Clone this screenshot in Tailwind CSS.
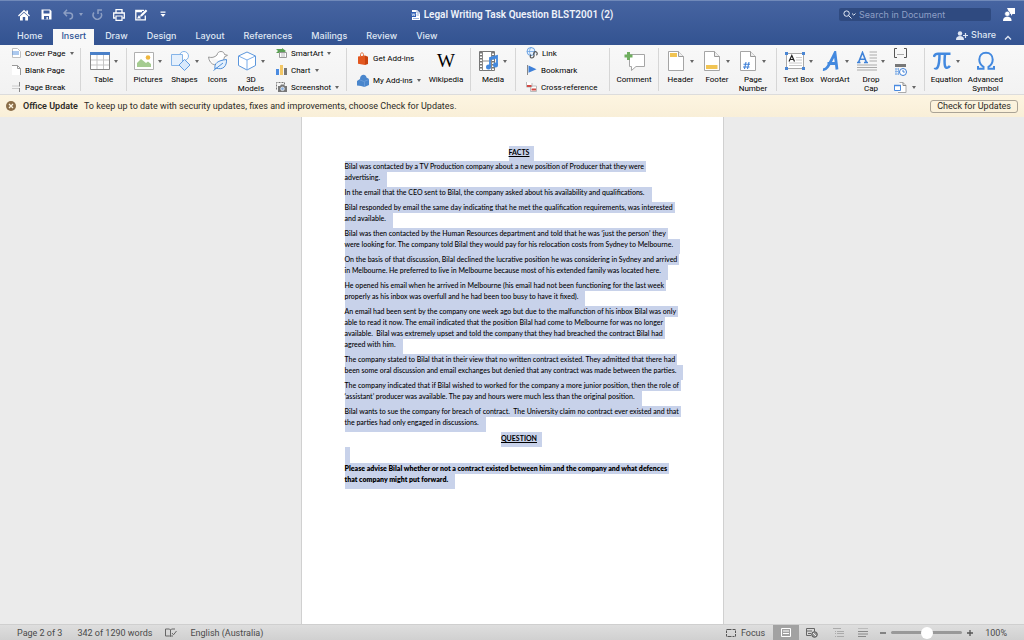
<!DOCTYPE html>
<html lang="en-AU">
  <head>
    <meta charset="UTF-8" />
    <meta name="viewport" content="width=device-width, initial-scale=1.0" />
    <title>Legal Writing Task Question BLST2001 (2)</title>
    <script src="https://cdn.jsdelivr.net/npm/@tailwindcss/browser@4"></script>
  </head>
  <body class="h-screen flex flex-col overflow-hidden bg-[#ebebeb] font-['Roboto','Liberation_Sans',sans-serif] text-[8px] leading-[9px] text-[#222]">
    <svg class="hidden">
      <symbol id="caret" viewBox="0 0 4 3"><path d="M0 0h4L2 3z" fill="#666" /></symbol>
    </svg>

    <header class="shrink-0 bg-linear-to-b from-[#4664a1] to-[#335391] text-white border-t border-[#7089b9]">
      <!-- title bar -->
      <div class="h-[27px] grid grid-cols-[1fr_auto_1fr] items-center">
        <div class="flex items-center pl-[18px]">
          <button aria-label="Home screen" class="mr-[11px]"><svg class="w-3 h-3" viewBox="0 0 12 12"><path d="M0 6.600 6 .8l2.300 2.200V1.500H10v3.200l2 1.900-.9.900L6 2.800.9 7.500z" fill="#fff" /><path d="M2 7.300 6 3.700l4 3.600V11.500H7.200V8H4.800v3.500H2z" fill="#fff" /></svg></button>
          <button aria-label="Save" class="mr-[11px]"><svg class="w-[11px] h-[11px]" viewBox="0 0 11 11"><path d="M.5.5h8.500l1.500 1.500v8.500H.5z" fill="#fff" /><path d="M2.500 1.500h6v3h-6zM3 7h5v3.500H6.800V8H5.500v2.500H3z" fill="#3d5c9b" /></svg></button>
          <button aria-label="Undo" class="flex items-center gap-[5px] mr-[9px] opacity-40"><svg class="w-[11px] h-[11px]" viewBox="0 0 11 11"><path d="M4 .8 1 4l3 3.200M1 4h5.500a3 3 0 0 1 0 6" fill="none" stroke="#fff" stroke-width="1.500" /></svg><svg class="w-1 h-[3px]" viewBox="0 0 4 3"><path d="M0 0h4L2 3z" fill="#fff" /></svg></button>
          <button aria-label="Redo" class="mr-[10px] opacity-40"><svg class="w-[11px] h-[11px]" viewBox="0 0 11 11"><path d="M2 3.500A4.200 4.200 0 1 0 9 4M6 5V1h4" fill="none" stroke="#fff" stroke-width="1.500" /></svg></button>
          <button aria-label="Print" class="mr-[10px]"><svg class="w-3 h-3" viewBox="0 0 12 12"><path d="M3 4V.7h6V4M2.500 9H.7V4h10.600v5H9.500" fill="none" stroke="#fff" stroke-width="1.300" /><path d="M3 7h6v4.300H3z" fill="#3d5c9b" stroke="#fff" stroke-width="1.200" /></svg></button>
          <button aria-label="Edit properties" class="mr-[12px]"><svg class="w-[13px] h-[12px]" viewBox="0 0 13 12"><path d="M9 1.300H.8v9.500h9.500V6.500M.8 2.500H7" fill="none" stroke="#fff" stroke-width="1.300" /><path d="m5 7.800.6-2.100L10.800.6l1.600 1.500-5.300 5.200z" fill="#fff" /><path d="M2 9.500 4 6l2 3.500z" fill="#fff" /></svg></button>
          <button aria-label="Customise toolbar"><svg class="w-[6px] h-[7px]" viewBox="0 0 6 7"><path d="M.5.500h5v1.200h-5zM.5 3h5L3 6z" fill="#fff" /></svg></button>
        </div>
        <h1 class="flex items-center gap-[4px] text-[10px] leading-3 font-semibold text-[#eef2fa]">
          <svg class="w-[9px] h-[10px]" viewBox="0 0 9 10"><path d="M1 0h5l3 3v7H1z" fill="#fff" /><path d="M6 0v3h3" fill="none" stroke="#9fb2d8" /><path d="M0 2h5v5H0z" fill="#2f5fb5" /><path d="m1 3.300.7 2.600.8-2.200.8 2.200.7-2.600" fill="none" stroke="#fff" stroke-width=".6" /><path d="M5.500 5H8M2 8.500h6" stroke="#6e8fcc" stroke-width=".7" /></svg>
          Legal Writing Task Question BLST2001 (2)
        </h1>
        <div class="flex items-center justify-end pr-[9px] gap-[12px]">
          <label class="flex items-center w-[152px] h-[13px] pl-1 rounded-[2px] bg-[#2f4a80]">
            <svg class="w-[13px] h-[9px] shrink-0" viewBox="0 0 13 9"><circle cx="3.600" cy="3.600" r="2.700" fill="none" stroke="#e4eaf6" /><path d="m5.500 5.500 3 3M9 3.500l1.800 1.700 1.700-1.700" fill="none" stroke="#e4eaf6" /></svg>
            <input type="text" aria-label="Search" placeholder="Search in Document" class="ml-[3px] w-full min-w-0 font-['Inter',sans-serif] text-[9px] leading-3 outline-none placeholder:text-[#8e9fc6]" />
          </label>
          <button aria-label="Feedback"><svg class="w-[12px] h-[13px]" viewBox="0 0 12 13"><path d="M4 0h8v6H9.500L8 8V6H7z" fill="#fff" /><circle cx="4.300" cy="5.800" r="2.600" fill="#fff" stroke="#3d5c9b" stroke-width=".6" /><path d="M0 13c0-3 1.500-4.200 4.300-4.200S8.600 10 8.600 13z" fill="#fff" /></svg></button>
        </div>
      </div>

      <!-- ribbon tabs -->
      <div class="h-[17px] flex items-end pl-[9px] pr-3 font-['Inter','Liberation_Sans',sans-serif] text-[9px] leading-[14px] text-[#dfe6f3] font-medium">
        <nav class="flex gap-[3px]">
          <button class="px-2 pb-[2px]">Home</button>
          <button class="px-2 pb-[2px] bg-[#f8f8f8] text-[#2f5596]">Insert</button>
          <button class="px-2 pb-[2px]">Draw</button>
          <button class="px-2 pb-[2px]">Design</button>
          <button class="px-2 pb-[2px]">Layout</button>
          <button class="px-2 pb-[2px]">References</button>
          <button class="px-2 pb-[2px]">Mailings</button>
          <button class="px-2 pb-[2px]">Review</button>
          <button class="px-2 pb-[2px]">View</button>
        </nav>
        <button class="ml-auto pb-[3px] flex items-center gap-[3px]"><svg class="w-[12px] h-[9px]" viewBox="0 0 12 9"><circle cx="4" cy="2.500" r="2.200" fill="#dfe6f3" /><path d="M0 9c0-3 1.500-4 4-4s4 1 4 4z" fill="#dfe6f3" /><path d="M9.500 2v5M7 4.500h5" stroke="#dfe6f3" stroke-width="1.200" /></svg>Share</button>
        <button aria-label="Collapse ribbon" class="ml-2 h-4"><svg class="w-[8px] h-[5px]" viewBox="0 0 8 5"><path d="m1 4.500 3-3 3 3" fill="none" stroke="#dfe6f3" stroke-width="1.300" /></svg></button>
      </div>
    </header>

    <!-- ribbon -->
    <section aria-label="Insert" class="shrink-0 h-[50px] flex bg-linear-to-b from-[#f8f8f8] to-[#f2f2f2] border-b border-[#dcdcdc] text-black">
      <div class="w-[81px] my-[3px] pl-3 border-r border-[#d6d6d6]">
        <div class="-my-px h-[46px] flex flex-col justify-between">
          <button class="flex items-center gap-1 h-3"><svg class="w-[9px] h-[10px]" viewBox="0 0 9 10"><path d="M.5.5h5l3 3v6h-8z" fill="#fff" stroke="#c0c0c0" /><path d="M0 4h7M0 6h7" stroke="#5b93dd" /></svg>Cover Page <svg class="w-1 h-[3px]"><use href="#caret" /></svg></button>
          <button class="flex items-center gap-1 h-3"><svg class="w-[9px] h-[10px]" viewBox="0 0 9 10"><path d="M0 0h5l3.500 3.500V10H0z" fill="#fff" /><path d="M0 .5h5.500l3 3V10M5.500.500v3h3" fill="none" stroke="#999" /></svg>Blank Page</button>
          <button class="flex items-center gap-1 h-3"><svg class="w-[9px] h-[10px]" viewBox="0 0 9 10"><path d="M0 4h7.500M0 6.500h7.500" stroke="#ccc" /><path d="M7.500 0v4.500M7.500 6v4" stroke="#888" /></svg>Page Break</button>
        </div>
      </div>
      <div class="w-[46px] my-[3px] flex border-r border-[#d6d6d6]">
        <button class="w-full pt-[3px] flex flex-col items-center gap-[4px]">
          <span class="flex items-center gap-[4px]"><svg class="w-5 h-5" viewBox="0 0 20 20"><path d="M.5 1.500h19v17H.5z" fill="#fff" stroke="#888" /><path d="M0 1h20v3H0z" fill="#4a80c8" /><path d="M7 4v14M13.500 4v14M1 9h18M1 14h18" stroke="#c5c5c5" /></svg><svg class="w-1 h-[3px]"><use href="#caret" /></svg></span>
          Table
        </button>
      </div>
      <div class="w-[220px] my-[3px] flex border-r border-[#d6d6d6]">
        <button class="w-[42px] pt-[3px] flex flex-col items-center gap-[4px]">
          <span class="flex items-center gap-[4px]"><svg class="w-5 h-5" viewBox="0 0 20 20"><path d="M.5 1.500h19v17H.5z" fill="#fff" stroke="#b0b0b0" /><path d="M3 16v-4l4-4 5 4 2-1.500 3 2.500v3z" fill="#a5cc91" /><circle cx="14" cy="6.500" r="2.300" fill="#efb73e" /></svg><svg class="w-1 h-[3px]"><use href="#caret" /></svg></span>
          Pictures
        </button>
        <button class="w-[31px] pt-[3px] flex flex-col items-center gap-[4px]">
          <span class="flex items-center gap-[4px]"><svg class="w-5 h-5" viewBox="0 0 20 20"><circle cx="13" cy="5" r="4.500" fill="#fff" stroke="#85b4e8" /><path d="M.5 3.500h11v11H.5z" fill="#e5f0fc" stroke="#85b4e8" /><path d="m13.500 8.500 5.500 5.500-5.500 5.500L8 14z" fill="#d8e9fc" stroke="#5f9ce2" /></svg><svg class="w-1 h-[3px]"><use href="#caret" /></svg></span>
          Shapes
        </button>
        <button class="w-[35px] pt-[3px] flex flex-col items-center gap-[4px]">
          <svg class="w-5 h-5 shrink-0" viewBox="0 0 20 20"><path d="M.5 6c3 1 6 .5 8.500-2C9.500 1.500 11 .5 13 .5c2 0 3.300 1.300 3.500 3l3 .8-3 1.500c-.3 2-1 3-2.500 4.200M.5 6C1 10 3 13 7 14" fill="#fff" stroke="#999" /><path d="M7 18c-1-6 3-8.500 11.500-9.500C19 15 15 19.500 8 17zM5.500 19.500 15 12" fill="#e4f0fc" stroke="#4f8fdb" /></svg>
          Icons
        </button>
        <button class="w-[32px] pt-[3px] flex flex-col items-center gap-[4px]">
          <span class="flex items-center gap-[4px]"><svg class="w-5 h-5" viewBox="0 0 20 20"><path d="m10 1 8.500 4v9.500L10 19l-8.500-4.500V5z" fill="#fff" stroke="#5b96dc" /><path d="M1.500 5 10 9l8.500-4M10 9v10" fill="none" stroke="#7badea" /></svg><svg class="w-1 h-[3px]"><use href="#caret" /></svg></span>
          <span>3D<br />Models</span>
        </button>
        <div class="ml-[9px] -my-px h-[46px] flex flex-col justify-between">
          <button class="flex items-center gap-1 h-3"><svg class="w-[11px] h-[10px]" viewBox="0 0 11 10"><path d="M0 1h6V0l4 3-4 3V5H0l2-2z" fill="#5ba053" /><path d="M3.500 4.500h7v5h-7z" fill="#fff" stroke="#999" /><path d="M5 6h4M5 8h4" stroke="#aaa" stroke-width=".8" /></svg>SmartArt <svg class="w-1 h-[3px]"><use href="#caret" /></svg></button>
          <button class="flex items-center gap-1 h-3"><svg class="w-[11px] h-[10px]" viewBox="0 0 11 10"><path d="M0 4h3v6H0z" fill="#4b8be0" /><path d="M4 0h3v10H4z" fill="#f3c766" /><path d="M8 3h3v7H8z" fill="#777" /></svg>Chart <svg class="w-1 h-[3px]"><use href="#caret" /></svg></button>
          <button class="flex items-center gap-1 h-3"><svg class="w-[11px] h-[10px]" viewBox="0 0 11 10"><path d="M.5 7.500V.5h8v2" fill="none" stroke="#777" stroke-dasharray="2 1" /><path d="M2 4h2l1-1.500h3L9 4h2v6H2z" fill="#777" /><circle cx="6.500" cy="6.800" r="1.800" fill="#8bb0e0" stroke="#fff" stroke-width=".7" /></svg>Screenshot <svg class="w-1 h-[3px]"><use href="#caret" /></svg></button>
        </div>
      </div>
      <div class="w-[124px] my-[3px] pl-[10px] flex border-r border-[#d6d6d6]">
        <div class="w-[66px] flex flex-col justify-around">
          <button class="flex items-center gap-1 h-3"><svg class="w-[12px] h-[13px] shrink-0" viewBox="0 0 12 13"><path d="m1 4.500 7-1v9.500l-7-1.200z" fill="#e2571f" /><path d="m8 3.500 3 1.200V12l-3 1z" fill="#c8430f" /><path d="M3.500 5V2.500C3.500.3 6.500.300 6.500 2.500v2" fill="none" stroke="#e0703f" /></svg><span class="whitespace-nowrap">Get Add-ins</span></button>
          <button class="flex items-center gap-1 h-3"><svg class="w-[12px] h-[13px] shrink-0" viewBox="0 0 12 13"><path d="M0 7l3-2c0-5 6-5.500 6.500-1.500L12 5v6l-4.500 2L4 12l-4-.5z" fill="#4a86cc" /><path d="m3 6 4 1.500 5-2M7.500 8v5" fill="none" stroke="#7aa8e0" stroke-width=".6" /></svg><span class="whitespace-nowrap">My Add-ins</span> <svg class="w-1 h-[3px] shrink-0"><use href="#caret" /></svg></button>
        </div>
        <button class="w-[46px] pt-[3px] flex flex-col items-center gap-[4px]">
          <span class="h-5 text-[19px] leading-5 text-black font-['Liberation_Serif',serif]">W</span>
          Wikipedia
        </button>
      </div>
      <div class="w-[45px] my-[3px] flex border-r border-[#d6d6d6]">
        <button class="w-full pt-[3px] flex flex-col items-center gap-[4px]">
          <span class="flex items-center gap-[4px]"><svg class="w-5 h-5" viewBox="0 0 20 20"><path d="M.5.500h15v19H.5z" fill="#fff" stroke="#777" /><path d="M3.500.5v19M12.500.5v19M3.500 10h9" stroke="#888" /><path d="M2 1v18M14 1v18" stroke="#777" stroke-width="2" stroke-dasharray="1.500 1.500" /><path d="M11 16V7l7-2v9M11 8.500l7-2" fill="none" stroke="#4388dd" stroke-width="1.800" /><circle cx="9.500" cy="16" r="2.500" fill="#4388dd" /><circle cx="16.500" cy="14" r="2.500" fill="#4388dd" /></svg><svg class="w-1 h-[3px]"><use href="#caret" /></svg></span>
          Media
        </button>
      </div>
      <div class="w-[94px] my-[3px] pl-[10px] border-r border-[#d6d6d6]">
        <div class="-my-px h-[46px] flex flex-col justify-between">
          <button class="flex items-center gap-1 h-3"><svg class="w-[12px] h-3" viewBox="0 0 12 12"><circle cx="5" cy="4.500" r="4" fill="#e8f2fd" stroke="#6ba2e2" /><path d="M1 4.500h8M5 .5C3 3 3 6 5 8.500" fill="none" stroke="#6ba2e2" stroke-width=".8" /><path d="M8 7.500c-1-1.500.5-3.500 2-2.800 1.700.8 1.500 2.800.3 3.500M7.500 7c1.300 1.500.300 4-1.500 4-2 0-2.300-2-1-3.200" fill="none" stroke="#555" stroke-width="1.200" /></svg>Link</button>
          <button class="flex items-center gap-1 h-3"><svg class="w-[11px] h-[10px]" viewBox="0 0 11 10"><path d="M1.500 0v10" stroke="#888" /><path d="m2.500.500 8 3.700-8 3.500z" fill="#3f80d8" /></svg>Bookmark</button>
          <button class="flex items-center gap-1 h-3"><svg class="w-[11px] h-[10px]" viewBox="0 0 11 10"><path d="M.5 0v5H6V1M4.500 9.500V4h6v5.500z" fill="#fff" stroke="#bbb" /><path d="M1 4h4.500M5.500 7.500h4.500" stroke="#d14a45" stroke-width="1.800" /></svg>Cross-reference</button>
        </div>
      </div>
      <div class="w-[49px] my-[3px] flex border-r border-[#d6d6d6]">
        <button class="w-full pt-[3px] flex flex-col items-center gap-[4px]">
          <svg class="w-[21px] h-5 shrink-0" viewBox="0 0 21 20"><path d="M5.500 3.500h15v12H12l-4.500 4v-4h-2z" fill="#fff" stroke="#a5a5a5" /><path d="M4.500 1v8M.5 5h8" stroke="#6fae5f" stroke-width="3" /></svg>
          Comment
        </button>
      </div>
      <div class="w-[118px] my-[3px] pl-[3px] flex border-r border-[#d6d6d6]">
        <button class="w-[37px] pt-[3px] flex flex-col items-center gap-[4px]">
          <span class="flex items-center gap-[6px]"><svg class="w-4 h-5" viewBox="0 0 16 20"><path d="M.5.500h10l5 5v14H.5z" fill="#fff" stroke="#a5a5a5" /><path d="M10.500.500v5h5" fill="#eee" stroke="#999" /><path d="M2 2h7v4H2z" fill="#f1c453" /></svg><svg class="w-1 h-[3px]"><use href="#caret" /></svg></span>
          Header
        </button>
        <button class="w-[36px] pt-[3px] flex flex-col items-center gap-[4px]">
          <span class="flex items-center gap-[6px]"><svg class="w-4 h-5" viewBox="0 0 16 20"><path d="M.5.500h10l5 5v14H.5z" fill="#fff" stroke="#a5a5a5" /><path d="M10.500.500v5h5" fill="#eee" stroke="#999" /><path d="M2 14h11.500v4H2z" fill="#f1c453" /></svg><svg class="w-1 h-[3px]"><use href="#caret" /></svg></span>
          Footer
        </button>
        <button class="w-[36px] pt-[3px] flex flex-col items-center gap-[4px]">
          <span class="flex items-center gap-[6px]"><svg class="w-4 h-5" viewBox="0 0 16 20"><path d="M.5.500h10l5 5v14H.5z" fill="#fff" stroke="#a5a5a5" /><path d="M10.500.500v5h5" fill="#eee" stroke="#999" /><path d="M6 11 4.500 18M9 11l-1.500 7M3.500 13.200h6.500M3 16h6.500" stroke="#3f80d8" stroke-width="1.100" /></svg><svg class="w-1 h-[3px]"><use href="#caret" /></svg></span>
          <span>Page<br />Number</span>
        </button>
      </div>
      <div class="w-[148px] my-[3px] pl-[3px] flex border-r border-[#d6d6d6]">
        <button class="w-[37px] pt-[3px] flex flex-col items-center gap-[4px] whitespace-nowrap">
          <span class="flex items-center gap-[4px]"><svg class="w-5 h-5" viewBox="0 0 20 20"><path d="M1.500 2.500h17v15h-17z" fill="#fff" stroke="#aaa" /><path d="M11 6.500h6M11 9h6M4 12h13M4 14.500h13" stroke="#ccc" /><path d="M4 10.500 6.800 4.500l2.700 6M5 8.500h3.500" fill="none" stroke="#222" stroke-width="1.200" /><path d="M0 1h3v3H0zM17 1h3v3h-3zM0 16h3v3H0zM17 16h3v3h-3z" fill="#4a86d4" /></svg><svg class="w-1 h-[3px]"><use href="#caret" /></svg></span>
          Text Box
        </button>
        <button class="w-[36px] pt-[3px] flex flex-col items-center gap-[4px]">
          <span class="flex items-center gap-[5px]"><svg class="w-[18px] h-5" viewBox="0 0 18 20"><path d="M1 18.500c4 .5 6-4.500 12-16.500l2 16.500M5.500 12.500h9" fill="none" stroke="#4389df" stroke-width="2.800" /></svg><svg class="w-1 h-[3px]"><use href="#caret" /></svg></span>
          WordArt
        </button>
        <button class="w-[36px] pt-[3px] flex flex-col items-center gap-[4px]">
          <span class="flex items-center gap-[4px]"><svg class="w-5 h-5" viewBox="0 0 20 20"><path d="M12.500 1H20M12.500 4H20M12.500 7H20M12.500 10H20M0 14h20M0 16.500h20M0 19h20" stroke="#aaa" /><path d="M1.500 11.500 5.500 1.500l4 10M3 8.200h5M0 11.500h3.500M7 11.500h4" fill="none" stroke="#3f82d8" stroke-width="1.600" /></svg><svg class="w-1 h-[3px]"><use href="#caret" /></svg></span>
          <span>Drop<br />Cap</span>
        </button>
        <div class="ml-[5px] -my-px h-[46px] flex flex-col justify-between">
          <button aria-label="Field" class="flex items-center h-3"><svg class="w-[13px] h-[10px]" viewBox="0 0 13 10"><path d="M3 .5H.5v9H3M10 .5h2.500v9H10" fill="none" stroke="#555" /><path d="M3 6.500h7" stroke="#aaa" /></svg></button>
          <button aria-label="Date and time" class="flex items-center h-3"><svg class="w-[13px] h-3" viewBox="0 0 13 12"><path d="M1 0h11v3H1z" fill="#777" /><path d="M1 5h3M1 7.500h3M1 10h3M2 4v7M4.500 4v7" stroke="#8ab4e8" /><circle cx="9" cy="8" r="3.500" fill="#fff" stroke="#3f80d8" /><path d="M9 6v2h1.800" fill="none" stroke="#3f80d8" /></svg></button>
          <button aria-label="Object" class="flex items-center gap-[5px] h-3"><svg class="w-[13px] h-[11px]" viewBox="0 0 13 11"><path d="M5.500.500h3.500l3 3v7H4" fill="#fff" stroke="#aaa" /><path d="M9 .5v3h3" fill="none" stroke="#888" /><path d="M.5 3.500h6v5h-6z" fill="#fff" stroke="#4a8be0" /><path d="M0 3.500h7" stroke="#4a8be0" stroke-width="1.500" /></svg><svg class="w-1 h-[3px]"><use href="#caret" /></svg></button>
        </div>
      </div>
      <div class="my-[3px] pl-[2px] flex">
        <button class="w-[39px] pt-[3px] flex flex-col items-center gap-[4px]">
          <span class="flex items-center gap-[5px]"><svg class="w-[18px] h-5" viewBox="0 0 18 20"><path d="M.8 6C1.500 3 3 2.700 5 2.700h12.500M6.500 3c0 6-.5 11-2 13.500-1 1.500-2.500 1.200-2.700.2M12 3c-.5 5-.8 9 0 12 .6 2.500 3.500 2.500 4.800-.2" fill="none" stroke="#4389df" stroke-width="2.500" /></svg><svg class="w-1 h-[3px]"><use href="#caret" /></svg></span>
          Equation
        </button>
        <button class="w-[39px] pt-[3px] flex flex-col items-center gap-[4px]">
          <svg class="w-[18px] h-5 shrink-0" viewBox="0 0 18 20"><path d="M1 15v2.800h5.500v-2C3.500 14 2.300 11.500 2.300 8.500c0-4 2.700-6.800 6.700-6.800s6.700 2.800 6.700 6.800c0 3-1.200 5.500-4.200 7.300v2H17V15" fill="none" stroke="#4389df" stroke-width="2" /></svg>
          <span>Advanced<br />Symbol</span>
        </button>
      </div>
    </section>

    <!-- update notice -->
    <div class="shrink-0 h-[22px] flex items-center pl-[6px] pr-[6px] bg-linear-to-b from-[#fdf5e1] to-[#f9efd8] text-[9px] leading-3 text-[#2c2a26]">
      <button aria-label="Dismiss"><svg class="w-[10px] h-[10px]" viewBox="0 0 10 10"><circle cx="5" cy="5" r="5" fill="#8a6d48" /><path d="m3 3 4 4M7 3 3 7" stroke="#fdf5e1" stroke-width="1.300" /></svg></button>
      <strong class="ml-[7px] font-semibold">Office Update</strong>
      <span class="ml-[6px]">To keep up to date with security updates, fixes and improvements, choose Check for Updates.</span>
      <button class="ml-auto h-[13px] px-[6px] rounded-[3px] border border-[#aaa396] leading-[11px]">Check for Updates</button>
    </div>

    <!-- document -->
    <main class="grow min-h-0 flex justify-center">
      <article class="w-[423px] px-[43px] pt-[29px] bg-white border-x border-[#d0d0d0] font-['Lato','Liberation_Sans',sans-serif] font-medium text-[7px] leading-[11px] text-black whitespace-nowrap">
        <h2 class="flex justify-center pl-[19px] font-bold leading-[13px]"><span class="h-[15px] pr-[5px] bg-[#c8d2ea] underline">FACTS</span></h2>
        <p class="flex flex-col items-start"><span class="pr-[2px] bg-[#c8d2ea]">Bilal was contacted by a TV Production company about a new position of Producer that they were</span><span class="h-[15px] pr-[7px] bg-[#c8d2ea]">advertising.</span></p>
        <p class="flex flex-col items-start"><span class="h-[15px] pr-[7px] bg-[#c8d2ea]">In the email that the CEO sent to Bilal, the company asked about his availability and qualifications.</span></p>
        <p class="flex flex-col items-start"><span class="pr-[2px] bg-[#c8d2ea]">Bilal responded by email the same day indicating that he met the qualification requirements, was interested</span><span class="h-[15px] pr-[7px] bg-[#c8d2ea]">and available.</span></p>
        <p class="flex flex-col items-start"><span class="pr-[2px] bg-[#c8d2ea]">Bilal was then contacted by the Human Resources department and told that he was ‘just the person’ they</span><span class="h-[15px] pr-[7px] bg-[#c8d2ea]">were looking for. The company told Bilal they would pay for his relocation costs from Sydney to Melbourne.</span></p>
        <p class="flex flex-col items-start"><span class="pr-[2px] bg-[#c8d2ea]">On the basis of that discussion, Bilal declined the lucrative position he was considering in Sydney and arrived</span><span class="h-[15px] pr-[7px] bg-[#c8d2ea]">in Melbourne. He preferred to live in Melbourne because most of his extended family was located here.</span></p>
        <p class="flex flex-col items-start"><span class="pr-[2px] bg-[#c8d2ea]">He opened his email when he arrived in Melbourne (his email had not been functioning for the last week</span><span class="h-[15px] pr-[7px] bg-[#c8d2ea]">properly as his inbox was overfull and he had been too busy to have it fixed).</span></p>
        <p class="flex flex-col items-start"><span class="pr-[2px] bg-[#c8d2ea]">An email had been sent by the company one week ago but due to the malfunction of his inbox Bilal was only</span><span class="pr-[2px] bg-[#c8d2ea]">able to read it now. The email indicated that the position Bilal had come to Melbourne for was no longer</span><span class="pr-[2px] bg-[#c8d2ea]">available.&nbsp; Bilal was extremely upset and told the company that they had breached the contract Bilal had</span><span class="h-[15px] pr-[7px] bg-[#c8d2ea]">agreed with him.</span></p>
        <p class="flex flex-col items-start"><span class="pr-[2px] bg-[#c8d2ea]">The company stated to Bilal that in their view that no written contract existed. They admitted that there had</span><span class="h-[15px] pr-[7px] bg-[#c8d2ea]">been some oral discussion and email exchanges but denied that any contract was made between the parties.</span></p>
        <p class="flex flex-col items-start"><span class="pr-[2px] bg-[#c8d2ea]">The company indicated that if Bilal wished to worked for the company a more junior position, then the role of</span><span class="h-[15px] pr-[7px] bg-[#c8d2ea]">‘assistant’ producer was available. The pay and hours were much less than the original position.</span></p>
        <p class="flex flex-col items-start"><span class="pr-[2px] bg-[#c8d2ea]">Bilal wants to sue the company for breach of contract.&nbsp; The University claim no contract ever existed and that</span><span class="h-[15px] pr-[7px] bg-[#c8d2ea]">the parties had only engaged in discussions.</span></p>
        <h2 class="flex justify-center pl-[19px] font-bold leading-[13px]"><span class="h-[15px] pr-[5px] bg-[#c8d2ea] underline">QUESTION</span></h2>
        <p class="w-[5px] h-4 bg-[#c8d2ea]"></p>
        <p class="flex flex-col items-start font-extrabold"><span class="pr-[2px] bg-[#c8d2ea]">Please advise Bilal whether or not a contract existed between him and the company and what defences</span><span class="h-[15px] pr-[7px] bg-[#c8d2ea]">that company might put forward.</span></p>
      </article>
    </main>

    <!-- status bar -->
    <footer class="shrink-0 h-4 flex items-center pl-[17px] pr-[17px] bg-linear-to-b from-[#dedede] to-[#d0d0d0] border-t border-[#cfcfcf] text-[9px] leading-3 text-[#4a4a4a]">
      <button>Page 2 of 3</button>
      <button class="ml-[15px]">342 of 1290 words</button>
      <button aria-label="Proofing" class="ml-[13px]"><svg class="w-[12px] h-[9px]" viewBox="0 0 12 9"><path d="M10 1H6.500L5.500 2 4.500 1h-4v7h4l1 .7 1-.7H8M5.500 2v6.500M7 5l1.500 1.800L11.500 3" fill="none" stroke="#666" /></svg></button>
      <button class="ml-[13px]">English (Australia)</button>
      <div class="ml-auto flex items-center h-full">
        <button class="flex items-center gap-[5px] mr-[8px]"><svg class="w-[10px] h-[8px]" viewBox="0 0 10 8"><path d="M3 .5H.5v7H3M7 .5h2.500v7H7M3 .5h4M3 7.500h4" fill="none" stroke="#555" stroke-dasharray="2.500 1" /></svg>Focus</button>
        <button aria-label="Print layout" class="w-[26px] h-full flex items-center justify-center bg-[#a2a2a2]"><svg class="w-[10px] h-[9px]" viewBox="0 0 10 9"><path d="M.5.500h9v8h-9zM2 3h6M2 5.500h6" fill="none" stroke="#fff" /></svg></button>
        <button aria-label="Web layout" class="w-[26px] flex justify-center"><svg class="w-[12px] h-[10px]" viewBox="0 0 12 10"><path d="M.5.500h8v3M.5.5v7H5M0 3h6M2 5.500h3" fill="none" stroke="#666" /><circle cx="8.500" cy="6.500" r="2.800" fill="#999" stroke="#555" /><path d="m7 5 3 3" stroke="#eee" /></svg></button>
        <button aria-label="Outline" class="w-[26px] flex justify-center"><svg class="w-[11px] h-[9px]" viewBox="0 0 11 9"><path d="M0 .5h8M4 3.500h7M4 5.500h7M4 8.500h7M2 3.500h1M2 5.500h1M2 8.500h1" stroke="#aaa" /></svg></button>
        <button aria-label="Draft" class="w-[24px] flex justify-center"><svg class="w-[10px] h-[9px]" viewBox="0 0 10 9"><path d="M0 .5h10" stroke="#bbb" /><path d="M0 3.500h10M0 6h10M0 8.500h8" stroke="#888" /></svg></button>
        <button aria-label="Zoom out" class="ml-[5px]"><svg class="w-[6px] h-[6px]" viewBox="0 0 6 6"><path d="M0 3h6" stroke="#555" stroke-width="1.300" /></svg></button>
        <input type="range" aria-label="Zoom" min="0" max="100" value="50" class="mx-[5px] w-[71px] h-[3px] appearance-none rounded-full bg-[#999] [&::-webkit-slider-thumb]:appearance-none [&::-webkit-slider-thumb]:size-[12px] [&::-webkit-slider-thumb]:rounded-full [&::-webkit-slider-thumb]:bg-white" />
        <button aria-label="Zoom in"><svg class="w-[6px] h-[6px]" viewBox="0 0 6 6"><path d="M0 3h6M3 0v6" stroke="#555" stroke-width="1.300" /></svg></button>
        <button class="ml-[12px]">100%</button>
      </div>
    </footer>
  </body>
</html>
